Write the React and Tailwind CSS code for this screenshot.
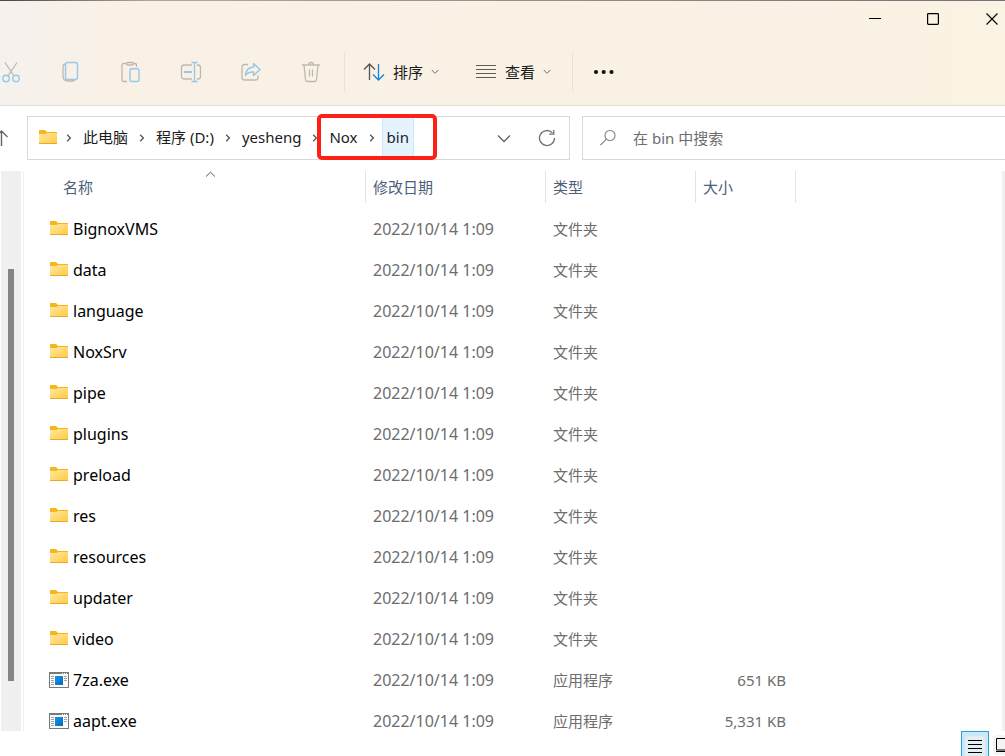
const rows = [
  ['BignoxVMS'], ['data'], ['language'], ['NoxSrv'], ['pipe'], ['plugins'],
  ['preload'], ['res'], ['resources'], ['updater'], ['video'],
  ['7za.exe', '651 KB'], ['aapt.exe', '5,331 KB'],
];

const grey = '#bdb9b2';
const blue = '#97c8e8';

function Folder() {
  return (
    <svg width="20" height="16" viewBox="0 1 20 16" aria-hidden="true" className="shrink-0">
      <defs>
        <linearGradient id="folder" x1="0" y1="0" x2="1" y2="1">
          <stop offset="0" stopColor="#ffe9a6" />
          <stop offset="1" stopColor="#ffca3e" />
        </linearGradient>
      </defs>
      <path d="M1 1.500Q1 1 1.500 1H7l2 2h10v3H1Z" fill="#f5b51b" />
      <path d="M1 5h6.500l1.500-1h10v10.500H1Z" fill="url(#folder)" />
      <path d="M1 14.500h18" stroke="#e5aa2f" />
    </svg>
  );
}

function Program() {
  return (
    <svg width="20" height="16" viewBox="0 0 20 16" aria-hidden="true" className="shrink-0">
      <defs>
        <linearGradient id="program" x1="0" y1="0" x2="1" y2="1">
          <stop offset="0" stopColor="#1697e5" />
          <stop offset="1" stopColor="#0569bd" />
        </linearGradient>
      </defs>
      <rect x=".5" y=".5" width="19" height="15" fill="#fbfbfb" stroke="#7b7974" />
      <path d="M0 1h20" stroke="#7b7974" strokeWidth="2" />
      <path d="M13 1.500h1m1 0h1m1 0h1" stroke="#fff" />
      <path d="M2 4.500h3m-3 2h3m-3 2h3m-3 2h3m-3 2h3m10-6h3m-3 2h3m-3-4h3" stroke="#a3a3a3" />
      <path d="M6 4h8v9H6Z" fill="url(#program)" />
    </svg>
  );
}

function Svg({ w = 22, h = 22, children, className = '' }) {
  return (
    <svg width={w} height={h} viewBox={`0 0 ${w} ${h}`} fill="none" aria-hidden="true" className={`shrink-0 ${className}`}>
      {children}
    </svg>
  );
}

function ChevronDown() {
  return <Svg w={8} h={6}><path d="m.8 1 3.200 3.400L7.200 1" stroke="#77746e" /></Svg>;
}

function Separator() {
  return (
    <span className="flex w-5 shrink-0 justify-center" aria-hidden="true">
      <Svg w={6} h={8}><path d="m1.200.8 3.200 3.200-3.200 3.200" stroke="#555" strokeWidth="1.300" /></Svg>
    </span>
  );
}

const tools = [
  ['复制', <>
    <path d="M5 3q-2 .5-2 2.500V15q0 5 5 5h4q2 0 3-1" stroke={grey} strokeWidth="1.300" />
    <rect x="5.500" y="1.500" width="12" height="17" rx="2" stroke={blue} strokeWidth="1.400" />
  </>],
  ['粘贴', <>
    <path d="M7 20.500H3.500q-1.500 0-1.500-1.500V4q0-1.500 1.500-1.500H6m8 0h1q1.500 0 1.500 1.500v2" stroke={grey} strokeWidth="1.300" />
    <rect x="6.500" y="1.500" width="7" height="2.500" rx="1.200" stroke={grey} strokeWidth="1.300" />
    <rect x="10" y="7.800" width="9" height="12.700" rx="1.600" stroke={blue} strokeWidth="1.400" />
  </>],
  ['重命名', <>
    <path d="M12 18H4q-2.500 0-2.500-2.500v-9Q1.500 4 4 4h8m5 0h1q2.500 0 2.500 2.500v9Q20.500 18 18 18h-1" stroke={grey} strokeWidth="1.300" />
    <path d="M4 11h8" stroke={blue} strokeWidth="2" />
    <path d="M11.500 1.500h6m-3 0v19m-3 0h6" stroke={blue} strokeWidth="1.400" />
  </>],
  ['共享', <>
    <path d="M8 3.500H4.500Q2 3.500 2 6v10.500Q2 19 4.500 19h11q2.500 0 2.500-2.500v-2" stroke={grey} strokeWidth="1.300" />
    <path d="M13.500 6V2.500l6.500 6-6.500 6V11q-5.500-.5-8 3.500Q6 6.500 13.500 6Z" stroke={blue} strokeWidth="1.400" strokeLinejoin="round" />
  </>],
  ['删除', <>
    <path d="M2 4h18M4 4l1.500 14.500q.2 2 2 2h7q1.800 0 2-2L18 4M8.500 4q0-2.500 2.500-2.500T13.500 4M9.500 8.500v7m3-7v7" stroke={grey} strokeWidth="1.300" />
  </>],
];

function TopBar() {
  return (
    <header className="flex flex-col border-b border-[#e2ddd5] bg-linear-to-r from-[#f5f1ee] via-[#f9f1e6] via-10% to-[#faf2e3]">
      <div className="h-px bg-linear-to-r from-[#4b4543] via-[#b3a79c] via-15% to-[#777078]" />
      <div className="flex h-9 justify-end">
        <button aria-label="最小化" className="flex w-[58px] items-center justify-center">
          <Svg w={12} h={12}><path d="M0 5.500h12" stroke="#000" /></Svg>
        </button>
        <button aria-label="最大化" className="flex w-[58px] items-center justify-center">
          <Svg w={12} h={12}><rect x=".6" y=".6" width="10.800" height="10.800" rx=".8" stroke="#000" strokeWidth="1.200" /></Svg>
        </button>
        <button aria-label="关闭" className="flex w-[43px] items-center justify-end pr-[7px]">
          <Svg w={12} h={12}><path d="m.5.5 11 11m0-11-11 11" stroke="#000" strokeWidth="1.100" /></Svg>
        </button>
      </div>
      <div className="flex h-[68px] items-center pt-px">
        <button aria-label="剪切" className="flex h-10 w-[41px] items-center">
          <Svg>
            <path d="M5 1.500 14 15m3-13.500L8 15" stroke={grey} strokeWidth="1.300" />
            <circle cx="6" cy="17.500" r="3.200" stroke={blue} strokeWidth="1.400" />
            <circle cx="16" cy="17.500" r="3.200" stroke={blue} strokeWidth="1.400" />
          </Svg>
        </button>
        {tools.map(([name, art]) => (
          <button key={name} aria-label={name} className="flex h-10 w-[60px] items-center justify-center"><Svg>{art}</Svg></button>
        ))}
        <span className="ml-[3px] h-10 w-px bg-[#e9e2d7]" />
        <button className="ml-[18px] flex h-10 items-center gap-2">
          <Svg>
            <path d="M6.500 19V3M1 8.500 6.500 3 12 8.500" stroke="#57544f" strokeWidth="1.300" />
            <path d="M15.500 3v16M10 13.500l5.500 5.500 5.500-5.500" stroke="#1583d8" strokeWidth="1.300" />
          </Svg>
          <span>排序</span><ChevronDown />
        </button>
        <button className="ml-9 flex h-10 items-center gap-2">
          <Svg><path d="M1 4.500h20m-20 4h20m-20 4h20m-20 4h20" stroke="#5f5c57" strokeWidth="1.200" /></Svg>
          <span>查看</span><ChevronDown />
        </button>
        <span className="ml-[21px] h-10 w-px bg-[#e9e2d7]" />
        <button aria-label="查看更多" className="ml-5 flex h-10 items-center">
          <Svg><g fill="#111"><circle cx="3" cy="11" r="2.100" /><circle cx="10.700" cy="11" r="2.100" /><circle cx="18.500" cy="11" r="2.100" /></g></Svg>
        </button>
      </div>
    </header>
  );
}

function AddressBar() {
  return (
    <div className="flex pt-[10px] pb-[11px]">
      <button aria-label="上移" className="flex w-[27px] shrink-0 items-center">
        <Svg w={9} h={18}><path d="M1.500 17V2m-6 6 6-6 6 6" stroke="#666" strokeWidth="1.400" /></Svg>
      </button>
      <nav aria-label="地址" className="flex h-11 w-[543px] shrink-0 items-center border border-[#d9d9d9] pl-[10px]">
        <Folder />
        <span className="w-px" />
        <Separator />
        <a href="#pc" className="px-1 pb-[2px]">此电脑</a>
        <Separator />
        <a href="#d" className="px-1 pb-[2px]">程序 (D:)</a>
        <Separator />
        <a href="#yesheng" className="px-1 pb-[2px]">yesheng</a>
        <span className="relative flex h-full items-center">
          <Separator />
          <a href="#nox" className="px-1 pb-[2px]">Nox</a>
          <Separator />
          <a href="#bin" className="flex h-full items-center border-x border-[#cce8ff] bg-[#e5f3ff] px-1 pb-[2px]">bin</a>
          <span className="pointer-events-none absolute -top-[3px] -right-[23px] -bottom-px left-3 rounded-[5px] border-4 border-[#ff2015]" />
        </span>
        <span className="ml-auto flex">
          <button aria-label="以前的位置" className="flex w-[43px] items-center justify-center">
            <Svg w={14} h={9}><path d="m1 1.500 6 6 6-6" stroke="#666" strokeWidth="1.400" /></Svg>
          </button>
          <button aria-label="刷新" className="flex w-[44px] items-center justify-center">
            <Svg w={18} h={18}><path d="M14.500 3.900A7.500 7.500 0 1 0 16.500 9M15.800 1v4.200h-4.600" stroke="#707070" strokeWidth="1.300" /></Svg>
          </button>
        </span>
      </nav>
      <label className="ml-3 flex h-11 min-w-0 flex-1 items-center border-y border-l border-[#d9d9d9] pl-4">
        <Svg w={18} h={18}><circle cx="11" cy="6.500" r="5" stroke="#818181" strokeWidth="1.100" /><path d="m7.400 10.200-6 6" stroke="#818181" strokeWidth="1.100" /></Svg>
        <input type="search" aria-label="在 bin 中搜索" placeholder="在 bin 中搜索" className="ml-4 min-w-0 flex-1 outline-none placeholder:text-[#6d6d6d]" />
      </label>
    </div>
  );
}

function Head({ children, className }) {
  return (
    <th scope="col" className={`p-0 pb-[5px] text-left font-normal ${className}`}>
      <div className="relative flex h-8 items-center border-r border-[#e3e3e3] pl-[7px] text-[#4c607a]">{children}</div>
    </th>
  );
}

export default function App() {
  return (
    <div className="flex h-screen flex-col overflow-hidden bg-white font-['Noto_Sans','Noto_Sans_CJK_SC',sans-serif] text-[15px] leading-5 text-[#1b1b1b]">
      <TopBar />
      <AddressBar />
      <main className="flex min-h-0 flex-1">
        <div className="ml-px w-5 shrink-0 bg-[#f0f0f0] pt-[98px]"><div className="ml-[7px] h-[412px] w-[6px] bg-[#858585]" /></div>
        <div className="ml-[2px] min-w-0 flex-1 overflow-hidden border-l border-[#f2f2f2]">
          <table className="w-[772px] table-fixed border-collapse" aria-label="bin">
            <thead>
              <tr>
                <Head className="w-[342px]">
                  <span className="pl-8">名称</span>
                  <span className="absolute top-0 left-[181px]"><Svg w={11} h={7}><path d="m1 5.500 4.500-4.300L10 5.500" stroke="#555" /></Svg></span>
                </Head>
                <Head className="w-[180px]">修改日期</Head>
                <Head className="w-[150px]">类型</Head>
                <Head className="w-[100px]">大小</Head>
              </tr>
            </thead>
            <tbody>
              {rows.map(([name, size]) => (
                <tr key={name} className="h-[41px] text-[#6d6d6d]">
                  <td className="p-0 pl-[25px] text-[16px] leading-5 text-black">
                    <div className="flex items-center gap-1">{size ? <Program /> : <Folder />}<span>{name}</span></div>
                  </td>
                  <td className="p-0 pl-[7px] text-[16px] leading-5">2022/10/14 1:09</td>
                  <td className="p-0 pl-[7px]">{size ? '应用程序' : '文件夹'}</td>
                  <td className="p-0 pr-[10px] text-right">{size}</td>
                </tr>
              ))}
            </tbody>
          </table>
        </div>
        <div className="w-[3px] shrink-0 bg-[#f0f0f0]" />
      </main>
      <footer className="flex h-[25px] shrink-0 justify-end overflow-hidden">
        <button aria-label="详细信息" className="flex h-7 w-7 justify-center border border-[#26a0da] bg-[#cbe8f6] pt-1">
          <span className="flex h-6 w-5 justify-center rounded-sm bg-[#e3eff3] pt-1">
            <Svg w={14} h={14}><path d="M0 .5h14m-14 4h14m-14 4h14m-14 4h14" stroke="#000" /></Svg>
          </span>
        </button>
        <button aria-label="大图标" className="mt-1 ml-1 flex h-5 w-3 overflow-hidden rounded-l-sm bg-[#f4f4f4] pt-[3px] pl-[3px]">
          <Svg w={14} h={15}><path d="M.5.500H13v11.500H.5ZM0 13.500h14" stroke="#000" /></Svg>
        </button>
      </footer>
    </div>
  );
}
